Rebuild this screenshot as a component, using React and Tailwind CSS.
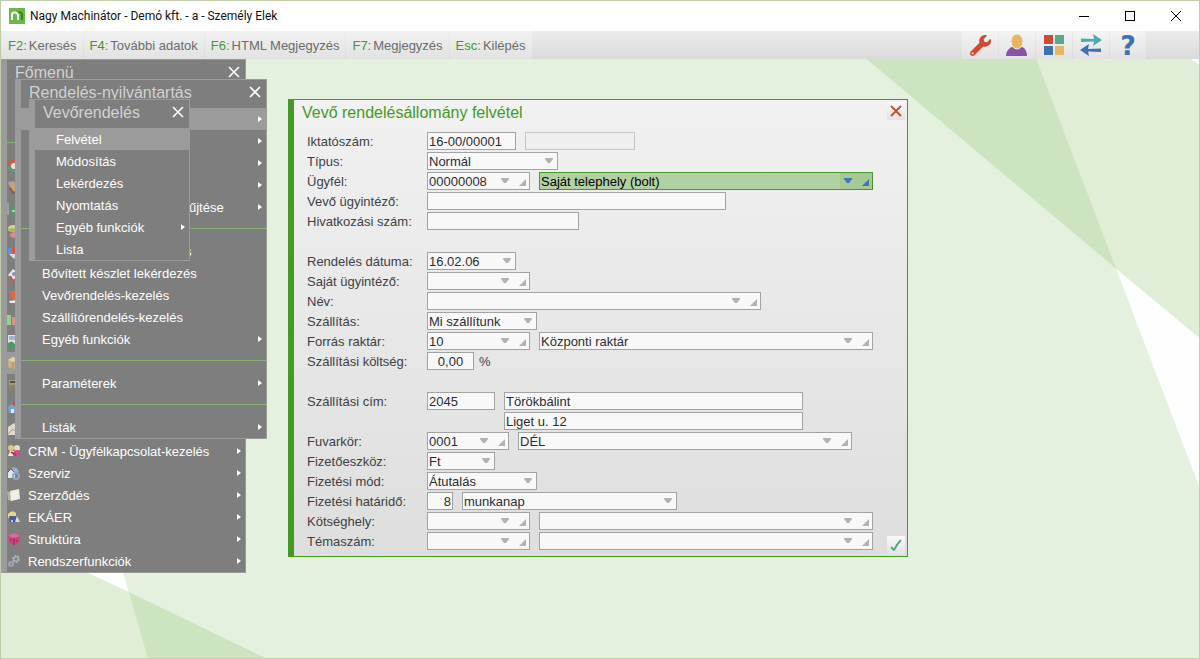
import React, { useState } from "react";
import { FaWrench } from "react-icons/fa";

const shortcuts = [
  { key: "F2:", label: "Keresés" },
  { key: "F4:", label: "További adatok" },
  { key: "F6:", label: "HTML Megjegyzés" },
  { key: "F7:", label: "Megjegyzés" },
  { key: "Esc:", label: "Kilépés" },
];

// rows with a name only are covered by the window above them
const mainMenu = [
  { name: "Kedvencek" },
  { name: "Keresés a menüben" },
  { separator: true },
  { name: "Törzsadatok", icon: "ring" },
  { name: "Partnerek", icon: "partner" },
  { name: "Pénzügy", icon: "flag" },
  { name: "Bank", icon: "coins" },
  { name: "Számlázás", icon: "shield" },
  { name: "Pénztár", icon: "badge" },
  { name: "Könyvelés", icon: "book" },
  { name: "Kimutatások", icon: "bars" },
  { name: "Eszközök", icon: "picture" },
  { name: "Rendelés-nyilvántartás", icon: "box", active: true },
  { name: "Készlet", icon: "stock" },
  { name: "Raktár", icon: "house" },
  { name: "Levelezés", icon: "mail" },
  { label: "CRM - Ügyfélkapcsolat-kezelés", icon: "people", sub: true },
  { label: "Szerviz", icon: "service", sub: true },
  { label: "Szerződés", icon: "folder", sub: true },
  { label: "EKÁER", icon: "truck", sub: true },
  { label: "Struktúra", icon: "cube", sub: true },
  { label: "Rendszerfunkciók", icon: "gears", sub: true },
];

const orderMenu = [
  { name: "Vevőrendelés", sub: true, active: true },
  { name: "Szállítórendelés", sub: true },
  { name: "Belső rendelés", sub: true },
  { name: "Ajánlatok", sub: true },
  { name: "Rendelések gyűjtése", label: "űjtése", indent: "pl-[147px]", sub: true },
  { separator: true },
  { name: "Készlet lekérdezés", label: "s", indent: "pl-[143px]" },
  { label: "Bővített készlet lekérdezés" },
  { label: "Vevőrendelés-kezelés" },
  { label: "Szállítórendelés-kezelés" },
  { label: "Egyéb funkciók", sub: true },
  { separator: true },
  { label: "Paraméterek", sub: true },
  { separator: true },
  { label: "Listák", sub: true },
];

const customerMenu = [
  { label: "Felvétel", active: true },
  { label: "Módosítás" },
  { label: "Lekérdezés" },
  { label: "Nyomtatás" },
  { label: "Egyéb funkciók", sub: true },
  { label: "Lista" },
];

const menuIcons = {
  ring: (
    <>
      <circle cx="7" cy="8" r="5" fill="none" stroke="#d9534a" strokeWidth="3" />
      <path d="M2 8a5 5 0 0 0 10 0" fill="none" stroke="#4fa565" strokeWidth="3" />
      <circle cx="7" cy="8" r="3" fill="#e8e4dc" />
    </>
  ),
  partner: (
    <>
      <path d="M1 2l5-1 4 3-3 3-5-1z" fill="#a9a39a" />
      <circle cx="7" cy="8" r="4" fill="#d3a067" />
      <path d="M3 8l3 5 3-1" fill="none" stroke="#6f6457" strokeWidth="2" />
    </>
  ),
  flag: (
    <>
      <path d="M1 1v12" stroke="#b9c7bd" strokeWidth="1" />
      <path d="M4 6l6-3v9l-5 1z" fill="#4f9c67" />
      <path d="M5 9h4" stroke="#a8d3b3" strokeWidth="2" />
    </>
  ),
  coins: (
    <>
      <ellipse cx="6" cy="4" rx="5" ry="3" fill="#e0cf86" />
      <ellipse cx="6" cy="6" rx="5" ry="2" fill="#a9b86c" />
      <ellipse cx="8" cy="11" rx="5" ry="3" fill="#dc8b94" />
    </>
  ),
  shield: (
    <>
      <path d="M1 2h6v6H1z" fill="#5d93cf" />
      <path d="M5 1h6v7H5z" fill="#d9534a" />
      <path d="M2 8h8l-3 5z" fill="#cfdcea" />
    </>
  ),
  badge: (
    <>
      <path d="M1 7l5-6 6 5-4 7z" fill="#ece8ea" />
      <path d="M3 8l3 5 4-3" fill="none" stroke="#c9575e" strokeWidth="2" />
      <circle cx="7" cy="6" r="2" fill="#8a8fb4" />
    </>
  ),
  book: (
    <>
      <path d="M2 1h7l1 9H5z" fill="#e0693f" />
      <path d="M2 11l8-1v3H3z" fill="#f3efe9" />
    </>
  ),
  bars: (
    <>
      <path d="M0 3h4v10H0z" fill="#8fd67f" />
      <path d="M5 5h3v8H5z" fill="#e08f8f" />
      <path d="M9 2h3v11H9z" fill="#7fa8d6" />
    </>
  ),
  picture: (
    <>
      <path d="M1 1h11v12H1z" fill="#dfe6ea" />
      <path d="M2 2h9v4H2z" fill="#9fb9cc" />
      <path d="M1 9q4-3 6 0t5 0v4H1z" fill="#4c9a63" />
    </>
  ),
  box: (
    <>
      <path d="M1 4l5-3 6 2v8l-6 2-5-2z" fill="#cbb086" />
      <path d="M1 4l5 2 6-3-6-2z" fill="#e3cfaa" />
      <path d="M6 6v7" stroke="#a98e63" />
    </>
  ),
  stock: (
    <>
      <path d="M2 2h8v5H2z" fill="#a39b7d" />
      <path d="M1 8l9-2 2 4-9 3z" fill="#8a8264" />
      <path d="M3 4h5" stroke="#57523f" strokeWidth="2" />
    </>
  ),
  house: (
    <>
      <path d="M1 7l5-5 6 5v6H2z" fill="#6fa7dc" />
      <path d="M4 4l4-3 4 5-2 1z" fill="#cf4a52" />
      <path d="M4 9h3v4H4z" fill="#e9eef3" />
    </>
  ),
  mail: (
    <>
      <path d="M1 5l6-4 6 5-1 7H1z" fill="#ddd8cb" />
      <path d="M1 12l5-5 6 5" fill="none" stroke="#a19b8b" />
    </>
  ),
  people: (
    <>
      <circle cx="4" cy="4" r="3" fill="#e3c28c" />
      <circle cx="10" cy="4" r="3" fill="#efd9c0" />
      <path d="M1 12l2-5h4v5z" fill="#f0ead8" />
      <path d="M6 12q0-6 4-6t3 6z" fill="#d8478f" />
      <path d="M4 8l5 3" stroke="#b23345" strokeWidth="2" />
    </>
  ),
  service: (
    <>
      <path d="M5 1l5 1 2 4-5 1z" fill="#86b5e4" />
      <path d="M1 6l3-3 4 4v5H1z" fill="#dfe6f0" />
      <path d="M0 7l4-4 3 3" fill="none" stroke="#c9454d" strokeWidth="1" />
      <circle cx="9" cy="10" r="3" fill="none" stroke="#8fa6c4" strokeWidth="2" />
    </>
  ),
  folder: (
    <>
      <path d="M0 3l4 2v8L1 12z" fill="#b5b1a2" />
      <path d="M3 3l9-2 1 10-9 2z" fill="#f1ede0" />
    </>
  ),
  truck: (
    <>
      <path d="M1 4q4-5 8-1v4l-8 1z" fill="#ecd67c" />
      <path d="M2 6h7v6H3z" fill="#4658a8" />
      <path d="M10 6l3 6H8z" fill="#d3dae6" />
      <circle cx="5" cy="11" r="1" fill="#e9e9e9" />
    </>
  ),
  cube: (
    <>
      <path d="M1 4l6-3 6 3-1 7-5 2-5-2z" fill="#c9457d" />
      <path d="M1 4l6 2 6-2-6-3z" fill="#e06a9b" />
      <path d="M7 6v7M3 8h2M9 9h2" stroke="#8f2753" />
    </>
  ),
  gears: (
    <>
      <circle cx="9" cy="5" r="3" fill="none" stroke="#a9b4c2" strokeWidth="2" strokeDasharray="2 1" />
      <circle cx="9" cy="5" r="2" fill="none" stroke="#a9b4c2" />
      <circle cx="4" cy="10" r="2" fill="none" stroke="#9aa5b3" strokeWidth="2" />
    </>
  ),
};

const CrossIcon = ({ className }) => (
  <svg viewBox="0 0 12 12" className={className} fill="none" stroke="currentColor" aria-hidden="true">
    <path d="M1 1l10 10M11 1L1 11" />
  </svg>
);

const MenuWindow = ({ title, items, className }) => (
  <nav
    aria-label={title}
    className={`absolute border-y border-r border-[#9b9b9b] bg-[#7e7e7e] text-white ${className}`}
  >
    <div className="border-l-[6px] border-[#9b9b9b]">
      <div className="flex h-7 items-start justify-between pt-px pr-[5px] pl-2">
        <h2 className="text-base leading-6 text-[#d2d2d2]">{title}</h2>
        <button type="button" aria-label={`${title} bezárása`} className="pt-[5px]">
          <CrossIcon className="size-3 stroke-[1.6]" />
        </button>
      </div>
      <ul>
        {items.map((item, index) =>
          item.separator ? (
            <li key={index} className="h-[22px] pt-2.5" role="separator">
              <div className="h-px bg-[#85b273]"></div>
            </li>
          ) : (
            <li key={index}>
              <button
                type="button"
                aria-label={item.name}
                className={`flex h-[22px] w-full items-center pr-1 text-left text-[13px] leading-4 whitespace-nowrap ${
                  item.active ? "bg-[#9b9b9b]" : ""
                }`}
              >
                <span className="w-[21px] shrink-0">
                  {item.icon && (
                    <svg viewBox="0 0 14 14" className="size-3.5" aria-hidden="true">
                      {menuIcons[item.icon]}
                    </svg>
                  )}
                </span>
                <span className={`grow pt-0.5 ${item.indent || ""}`}>{item.label}</span>
                {item.sub && (
                  <svg viewBox="0 0 4 6" className="h-1.5 w-1 fill-white" aria-hidden="true">
                    <path d="M0 0l4 3-4 3z" />
                  </svg>
                )}
              </button>
            </li>
          )
        )}
      </ul>
    </div>
  </nav>
);

const DownIcon = ({ className }) => (
  <svg viewBox="0 0 8 5" className={`h-[5px] w-2 ${className || ""}`} fill="currentColor" aria-hidden="true">
    <path d="M0 0h8v1L5 5H3L0 1z" />
  </svg>
);

const CornerIcon = () => (
  <svg viewBox="0 0 7 7" className="size-[7px]" fill="currentColor" aria-hidden="true">
    <path d="M7 0v7H0z" />
  </svg>
);

const TextField = ({ className, ...props }) => (
  <input
    type="text"
    className={`h-[18px] border border-[#a3a3a3] bg-[#f8f8f8] px-px text-[#2c2c33] outline-none disabled:border-[#c6c6c6] disabled:bg-transparent ${className}`}
    {...props}
  />
);

// code or name field with a list button and a "more" corner
const LookupField = ({ className, active, label, ...props }) => (
  <div
    className={`flex h-[18px] border ${
      active ? "border-[#459a25] bg-[#b1d1a3] text-black" : "border-[#a3a3a3] bg-[#f8f8f8] text-[#2c2c33]"
    } ${className}`}
  >
    <input type="text" aria-label={label} className="w-0 grow bg-transparent px-px pt-px outline-none" {...props} />
    <div className={`flex ${active ? "bg-[#a5c994] text-[#3f76b5]" : "text-[#b2b2b2]"}`}>
      <button type="button" aria-label={`${label} lista`} className="flex w-4 items-start justify-center pt-[5px]">
        <DownIcon />
      </button>
      <button type="button" aria-label={`${label} részletek`} className="flex w-4 items-end justify-end pr-[3px] pb-[3px]">
        <CornerIcon />
      </button>
    </div>
  </div>
);

const SelectField = ({ className, options, ...props }) => (
  <div className={`relative h-[18px] border border-[#a3a3a3] bg-[#f8f8f8] text-[#2c2c33] ${className}`}>
    <select className="block h-4 w-full appearance-none bg-transparent px-px pt-px leading-4 outline-none" {...props}>
      {options.map((option) => (
        <option key={option}>{option}</option>
      ))}
    </select>
    <DownIcon className="pointer-events-none absolute top-[5px] right-1 text-[#b2b2b2]" />
  </div>
);

const Row = ({ label, htmlFor, children }) => (
  <div className="flex h-5 items-center">
    <label htmlFor={htmlFor} className="w-[120px] shrink-0 pt-0.5 text-[#3e3e44]">
      {label}
    </label>
    <div className="flex items-center gap-[9px]">{children}</div>
  </div>
);

const OrderDialog = () => {
  const [form, setForm] = useState({
    number: "16-00/00001",
    customerCode: "00000008",
    customer: "Saját telephely (bolt)",
    contact: "",
    reference: "",
    ownCode: "",
    ownName: "",
    storeCode: "10",
    store: "Központi raktár",
    cost: "0,00",
    zip: "2045",
    city: "Törökbálint",
    street: "Liget u. 12",
    routeCode: "0001",
    route: "DÉL",
    days: "8",
    costCode: "",
    costPlace: "",
    topicCode: "",
    topic: "",
  });

  const bind = (name) => ({
    id: name,
    name,
    value: form[name],
    onChange: (e) => setForm({ ...form, [name]: e.target.value }),
  });

  return (
    <form
      aria-labelledby="dialog-title"
      className="absolute top-10 left-[287px] flex w-[620px] border border-l-[6px] border-[#459a25] bg-linear-to-b from-[#f1f1f1] to-[#dedede] pb-[5px] text-[13px] leading-4"
    >
      <div className="grow">
        <h1 id="dialog-title" className="h-[31px] pt-px pl-2 text-base leading-6 text-[#449a22]">
          Vevő rendelésállomány felvétel
        </h1>
        <div className="pl-[13px]">
          <Row label="Iktatószám:" htmlFor="number">
            <TextField {...bind("number")} className="w-[89px]" />
            <TextField disabled aria-label="Iktatószám kiegészítés" className="w-[110px]" />
          </Row>
          <Row label="Típus:" htmlFor="type">
            <SelectField id="type" options={["Normál"]} className="w-[131px]" />
          </Row>
          <Row label="Ügyfél:" htmlFor="customerCode">
            <LookupField {...bind("customerCode")} label="Ügyfél kód" className="w-[103px]" />
            <LookupField {...bind("customer")} label="Ügyfél név" active className="w-[334px]" />
          </Row>
          <Row label="Vevő ügyintéző:" htmlFor="contact">
            <TextField {...bind("contact")} className="w-[299px]" />
          </Row>
          <Row label="Hivatkozási szám:" htmlFor="reference">
            <TextField {...bind("reference")} className="w-[152px]" />
          </Row>
        </div>

        <div className="pt-5 pl-[13px]">
          <Row label="Rendelés dátuma:" htmlFor="date">
            <SelectField id="date" options={["16.02.06"]} className="w-[89px]" />
          </Row>
          <Row label="Saját ügyintéző:" htmlFor="ownCode">
            <LookupField {...bind("ownCode")} label="Saját ügyintéző" className="w-[103px]" />
          </Row>
          <Row label="Név:" htmlFor="ownName">
            <LookupField {...bind("ownName")} label="Név" className="w-[334px]" />
          </Row>
          <Row label="Szállítás:" htmlFor="delivery">
            <SelectField id="delivery" options={["Mi szállítunk"]} className="w-[110px]" />
          </Row>
          <Row label="Forrás raktár:" htmlFor="storeCode">
            <LookupField {...bind("storeCode")} label="Raktár kód" className="w-[103px]" />
            <LookupField {...bind("store")} label="Raktár név" className="w-[334px]" />
          </Row>
          <Row label="Szállítási költség:" htmlFor="cost">
            <TextField {...bind("cost")} className="w-[47px] text-center" />
            <span className="-ml-1 pt-0.5 text-[#3e3e44]">%</span>
          </Row>
        </div>

        <div className="pt-5 pl-[13px]">
          <Row label="Szállítási cím:" htmlFor="zip">
            <TextField {...bind("zip")} className="w-[68px]" />
            <TextField {...bind("city")} aria-label="Város" className="w-[299px]" />
          </Row>
          <Row>
            <TextField {...bind("street")} aria-label="Utca, házszám" className="ml-[77px] w-[299px]" />
          </Row>
          <Row label="Fuvarkör:" htmlFor="routeCode">
            <LookupField {...bind("routeCode")} label="Fuvarkör kód" className="w-[82px]" />
            <LookupField {...bind("route")} label="Fuvarkör név" className="w-[334px]" />
          </Row>
          <Row label="Fizetőeszköz:" htmlFor="currency">
            <SelectField id="currency" options={["Ft", "EUR"]} className="w-[68px]" />
          </Row>
          <Row label="Fizetési mód:" htmlFor="payment">
            <SelectField id="payment" options={["Átutalás", "Készpénz"]} className="w-[110px]" />
          </Row>
          <Row label="Fizetési határidő:" htmlFor="days">
            <TextField {...bind("days")} className="w-[26px] text-right" />
            <SelectField aria-label="Határidő egysége" options={["munkanap", "nap"]} className="w-[215px]" />
          </Row>
          <Row label="Kötséghely:" htmlFor="costCode">
            <LookupField {...bind("costCode")} label="Kötséghely kód" className="w-[103px]" />
            <LookupField {...bind("costPlace")} label="Kötséghely név" className="w-[334px]" />
          </Row>
          <Row label="Témaszám:" htmlFor="topicCode">
            <LookupField {...bind("topicCode")} label="Témaszám kód" className="w-[103px]" />
            <LookupField {...bind("topic")} label="Témaszám név" className="w-[334px]" />
          </Row>
        </div>
      </div>

      <div className="flex flex-col justify-between pt-0.5 pr-0.5">
        <button
          type="button"
          aria-label="Bezárás"
          className="flex size-[18px] items-center justify-center bg-linear-to-b from-[#fafafa] to-[#e2e2e2] text-[#cf4a38]"
        >
          <CrossIcon className="size-3 stroke-[1.8]" />
        </button>
        <button
          type="button"
          aria-label="Rendben"
          className="-mb-[3px] flex size-[18px] items-center justify-center bg-linear-to-b from-[#fafafa] to-[#e2e2e2]"
        >
          <svg viewBox="0 0 12 12" className="size-3" fill="none" stroke="#4fa585" strokeWidth="1.8" aria-hidden="true">
            <path d="M1 8l3 3Q7 5 11 1" />
          </svg>
        </button>
      </div>
    </form>
  );
};

const TitleBar = () => (
  <header className="flex h-[30px] items-center justify-between bg-white">
    <div className="flex items-center gap-[5px] pl-2">
      <svg viewBox="0 0 16 16" className="size-4" aria-hidden="true">
        <path d="M0 0h16v16H0z" fill="#69b947" />
        <path d="M8 5q5-2 5 2v5" fill="none" stroke="#2f8a1a" strokeWidth="2" />
        <path d="M3 12V5M3 7q0-3 3-2.500t3 3V12" fill="none" stroke="#fff" strokeWidth="2" />
      </svg>
      <span className="font-[Roboto,'Noto_Sans',sans-serif] text-xs text-[#111]">
        Nagy Machinátor - Demó kft. - a - Személy Elek
      </span>
    </div>
    <div className="flex text-black">
      <button type="button" aria-label="Kis méret" className="flex h-7 w-[46px] items-center justify-center">
        <span className="h-px w-2.5 bg-black"></span>
      </button>
      <button type="button" aria-label="Teljes méret" className="flex h-7 w-[46px] items-center justify-center">
        <span className="size-2.5 border border-black"></span>
      </button>
      <button type="button" aria-label="Ablak bezárása" className="flex h-7 w-[46px] items-center justify-center">
        <CrossIcon className="size-3" />
      </button>
    </div>
  </header>
);

const tools = [
  { name: "Beállítások", icon: <FaWrench className="size-[21px] text-[#cf4a32]" /> },
  {
    name: "Felhasználó",
    icon: (
      <svg viewBox="0 0 22 22" className="size-[22px]">
        <path d="M4 14q1-1 3-1h8q2 0 3 1 3 3 3 8H0q0-5 4-8z" fill="#8b53a5" />
        <ellipse cx="11" cy="7.500" rx="6" ry="7.500" fill="#e9b560" stroke="#ededed" strokeWidth="1" />
      </svg>
    ),
  },
  {
    name: "Modulok",
    icon: (
      <svg viewBox="0 0 20 20" className="size-5">
        <path d="M0 0h9v9H0z" fill="#cf4a32" />
        <path d="M11 0h9v9h-9z" fill="#55aa87" />
        <path d="M0 11h9v9H0z" fill="#3c72b0" />
        <path d="M11 11h9v9h-9z" fill="#e9b560" />
      </svg>
    ),
  },
  {
    name: "Váltás",
    icon: (
      <svg viewBox="0 0 22 22" className="size-[22px]">
        <path d="M1 4.500l13 .5-1-5 9 6-9 6 1-4.500L1 8z" fill="#48adb0" />
        <path d="M21 14.500l-13 .5 1-5-9 6 9 6-1-4.500 13 .5z" fill="#3c72b0" />
      </svg>
    ),
  },
  {
    name: "Súgó",
    icon: <span className="pt-0.5 font-['DejaVu_Sans',sans-serif] text-[27px] leading-7 font-bold text-[#3c72b0]">?</span>,
  },
];

const Toolbar = () => (
  <div className="flex h-7 justify-between bg-linear-to-b from-[#ececec] to-[#dadada] pr-[53px] pl-px text-[13px] text-[#6b6b6b]">
    <div className="flex gap-px">
      {shortcuts.map((item) => (
        <button
          key={item.key}
          type="button"
          className="flex items-center gap-0.5 bg-linear-to-b from-[#f2f2f2] to-[#e2e2e2] px-1.5 pt-0.5"
        >
          <span className="text-[#449a22]">{item.key}</span>
          <span>{item.label}</span>
        </button>
      ))}
    </div>
    <div className="flex gap-px">
      {tools.map((tool) => (
        <button
          key={tool.name}
          type="button"
          aria-label={tool.name}
          className="flex w-9 items-center justify-center bg-linear-to-b from-[#f4f4f4] to-[#e2e2e2]"
        >
          {tool.icon}
        </button>
      ))}
    </div>
  </div>
);

const Backdrop = () => (
  <svg viewBox="0 0 1200 600" preserveAspectRatio="none" className="absolute inset-0 size-full" aria-hidden="true">
    <path d="M0 0h1200v600H0z" fill="#e4f1df" />
    <path d="M1037 0h163v279l-83-69z" fill="#e0edd7" />
    <path d="M867 0h170l80 210z" fill="#cce5c0" />
    <path d="M1117 210l83 69v149z" fill="#fdfefd" />
    <path d="M1192 0h8v6z" fill="#fdfefd" />
    <path d="M0 473l128 61 19 66H0z" fill="#e0edd7" />
    <path d="M86 514h36l6 20z" fill="#fdfefd" />
    <path d="M128 534l137 66H147z" fill="#cce5c0" />
  </svg>
);

const App = () => {
  return (
    <div className="flex min-h-screen flex-col border border-[#c0cfa9] font-['Liberation_Sans',Arial,sans-serif]">
      <TitleBar />
      <Toolbar />
      <main className="relative grow overflow-hidden">
        <Backdrop />
        <MenuWindow title="Főmenü" items={mainMenu} className="top-0 left-0 w-[245px]" />
        <MenuWindow title="Rendelés-nyilvántartás" items={orderMenu} className="top-5 left-3.5 w-[252px]" />
        <MenuWindow title="Vevőrendelés" items={customerMenu} className="top-10 left-7 w-[161px]" />
        <OrderDialog />
      </main>
    </div>
  );
};

export default App;
